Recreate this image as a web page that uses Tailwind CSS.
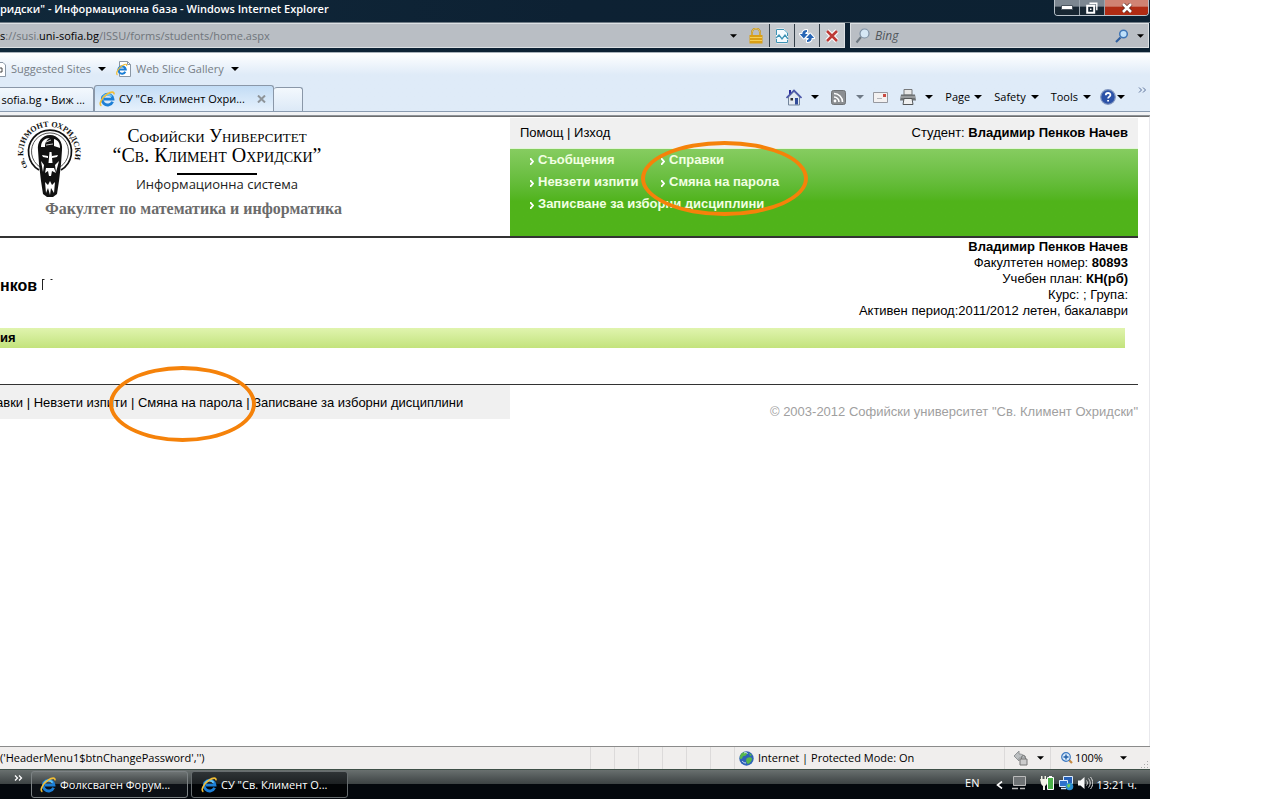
<!DOCTYPE html>
<html lang="bg">
<head>
<meta charset="utf-8">
<title>СУ "Св. Климент Охридски" - Информационна база</title>
<script src="https://cdn.jsdelivr.net/npm/@tailwindcss/browser@4"></script>
</head>
<body class="bg-white">
<svg class="hidden" aria-hidden="true">
  <symbol id="caret" viewBox="0 0 8 4"><path d="M0 0h8L4 4z" fill="currentColor"/></symbol>
  <symbol id="ie" viewBox="0 0 16 16">
    <path d="M13.6 10.7a5.4 5.4 0 1 1 .4-2.6H5" fill="none" stroke="#1c7fd6" stroke-width="2.8"/>
    <path d="M4 6.600a5 5 0 0 1 8.600-1" fill="none" stroke="#6cc8f5" stroke-width="1.800"/>
    <path d="M2.4 14.8C-.6 13.200 2.600 7 8 3.200 12 .5 15.600.200 14.900 3.400" fill="none" stroke="#f2be35" stroke-width="1.600"/>
  </symbol>
  <symbol id="page-ie" viewBox="0 0 15 16">
    <path d="M3.500.5h8l3 3v12h-11z" fill="#fff" stroke="#8a97a5"/><path d="M11.500.5v3h3" fill="none" stroke="#8a97a5"/>
    <path d="M9.300 10.800a3.700 3.700 0 1 1 .4-2.300H3.500" fill="none" stroke="#1c7fd6" stroke-width="2.100"/>
    <path d="M1.500 14C-1 12 3 6.500 6.500 4.500s4.500-1.500 4 .5" fill="none" stroke="#f2be35" stroke-width="1.200"/>
  </symbol>
</svg>

<div class="mr-[130px] flex min-h-[799px] flex-col overflow-hidden font-['Open_Sans','Noto_Sans',sans-serif] text-[12px] leading-4 text-black">

  <!-- Window frame: title and address row -->
  <header class="border-b border-[#a9b2ba] bg-linear-to-r from-[#10283a] via-[#0d2133] to-[#0c2132]">
    <div class="flex h-[22px] items-start justify-between">
      <h1 class="pt-px text-[11px] font-semibold whitespace-nowrap text-white">ридски" - Информационна база - Windows Internet Explorer</h1>
      <div class="mr-px flex h-4 overflow-hidden rounded-b-[4px] border border-t-0 border-[#b9c2ca]">
        <button aria-label="Minimize" class="flex w-[25px] items-center justify-center border-r border-[#9aa5ae] bg-linear-to-b from-[#7c8791] from-40% to-[#182733] to-50%"><svg class="h-[5px] w-3" viewBox="0 0 12 5"><path d="M.5.5h11v4H.5z" fill="#fff" stroke="#4b5660"/></svg></button>
        <button aria-label="Restore" class="flex w-[25px] items-center justify-center border-r border-[#9aa5ae] bg-linear-to-b from-[#7c8791] from-40% to-[#182733] to-50%"><svg class="h-3 w-3" viewBox="0 0 12 12"><path d="M3.500 1.200h7.300v7" fill="none" stroke="#fff" stroke-width="1.400"/><path d="M1.200 3.700h7v7h-7z" fill="none" stroke="#fff" stroke-width="2"/><path d="M4 6.500h1.500V8H4z" fill="#fff"/></svg></button>
        <button aria-label="Close" class="flex w-[43px] items-center justify-center bg-linear-to-b from-[#d08373] from-40% to-[#b02c14] to-50%"><svg class="h-[10px] w-3" viewBox="0 0 12 10"><path d="M2 1l8 8M10 1L2 9" stroke="#5a2820" stroke-width="4"/><path d="M2 1l8 8M10 1L2 9" stroke="#fff" stroke-width="2.600"/></svg></button>
      </div>
    </div>
    <div class="flex gap-[5px] border-t border-[#707c86] pb-1">
      <div class="flex h-[25px] min-w-0 flex-1 border border-l-0 border-[#dde1e4] bg-[#b9bec4]">
        <div role="textbox" contenteditable="true" aria-label="Address" class="flex flex-1 items-center text-[11px] whitespace-nowrap text-[#6f757b]"><span><span class="text-black">s</span>://susi.<span class="text-black">uni-sofia.bg</span>/ISSU/forms/students/home.aspx</span></div>
        <button aria-label="Show addresses" class="flex w-5 items-center justify-center"><svg class="h-1 w-[7px]"><use href="#caret"/></svg></button>
        <button aria-label="Security report" class="flex w-[26px] items-center justify-center"><svg class="h-4 w-4" viewBox="0 0 16 16"><path d="M4 8V4.500a4 4 0 0 1 8 0V8" fill="none" stroke="#b98b22" stroke-width="2"/><path d="M4 8V4.500a4 4 0 0 1 8 0V8" fill="none" stroke="#f3d26a" stroke-width=".8"/><path d="M1.500 7h13v8.500h-13z" fill="#d99f16"/><path d="M2 9.500h12M2 12.500h12" stroke="#f5cf55"/></svg></button>
        <button aria-label="Compatibility view" class="flex w-[25px] items-center justify-center border-l border-[#333f49] bg-[#c5cacf]"><svg class="h-4 w-4" viewBox="0 0 16 16"><path d="M2.500 1h7.500l3.500 3.500V15h-11z" fill="#f4fbff" stroke="#fff"/><path d="M2.500 7V1.500H10L13.500 5v3M2.500 11v3.500h11V12" fill="none" stroke="#3d93b5"/><path d="M2 10l3-3 3 4 3-4 3 4" fill="none" stroke="#3d93b5" stroke-width="1.300"/></svg></button>
        <button aria-label="Refresh" class="flex w-[25px] items-center justify-center border-l border-[#333f49] bg-[#c5cacf]"><svg class="h-4 w-4" viewBox="0 0 16 16"><g stroke="#fff" stroke-width="2" stroke-linejoin="round"><path d="M8 2C5 2 3.300 3.300 3.300 6H.8l4 4.500 4-4.500H6.300C6.300 4.500 7 4 8 4z"/><path d="M8 14c3 0 4.700-1.300 4.700-4h2.500l-4-4.500-4 4.500h2.500c0 1.500-.7 2-1.700 2z"/></g><g fill="#2866b4"><path d="M8 2C5 2 3.300 3.300 3.300 6H.8l4 4.500 4-4.500H6.300C6.300 4.500 7 4 8 4z"/><path d="M8 14c3 0 4.700-1.300 4.700-4h2.500l-4-4.500-4 4.500h2.500c0 1.500-.7 2-1.700 2z"/></g></svg></button>
        <button aria-label="Stop" class="flex w-[25px] items-center justify-center border-l border-[#333f49] bg-[#c5cacf]"><svg class="h-[14px] w-[14px]" viewBox="0 0 14 14"><path d="M2 2l10 10M12 2L2 12" stroke="#fff" stroke-width="4.600"/><path d="M2 2l10 10M12 2L2 12" stroke="#bd3a36" stroke-width="2.600"/></svg></button>
      </div>
      <div class="mr-px flex h-[25px] w-[299px] items-center border border-[#dde1e4] bg-[#b9bec4] pr-1 pl-1">
        <svg class="h-4 w-4" viewBox="0 0 16 16"><path d="M6 9L1.500 14.500" stroke="#6c7780" stroke-width="2"/><circle cx="9.500" cy="5.500" r="4.500" fill="#d6e7f5" stroke="#7e90a4" stroke-width="1.200"/></svg>
        <input type="text" aria-label="Search" placeholder="Bing" class="ml-1 min-w-0 flex-1 bg-transparent italic outline-none placeholder:text-[#51575c]">
        <button aria-label="Search Bing" class="mr-2"><svg class="block h-[14px] w-[14px]" viewBox="0 0 14 14"><path d="M5.500 8.500L1 13" stroke="#2f5f9f" stroke-width="2.200"/><circle cx="8.500" cy="5" r="3.800" fill="#bfe0fa" stroke="#3f75b5" stroke-width="1.500"/></svg></button>
        <button aria-label="Search options"><svg class="block h-1 w-[7px]"><use href="#caret"/></svg></button>
      </div>
    </div>
  </header>

  <!-- Favorites and tabs -->
  <div class="border-b border-[#8d9297] bg-linear-to-b from-white to-[#dfebf8] to-35%">
    <div class="mb-px flex h-8 items-center text-[#777e86]">
      <svg class="h-[15px] w-[6px]" viewBox="0 0 6 15"><path d="M0 .5h3L5.500 3v11.500H0" fill="#fff" stroke="#8a97a5"/><path d="M0 6h2v4H0" fill="none" stroke="#444"/></svg>
      <a href="#" class="ml-[5px] flex w-[105px] items-center justify-between text-[11px] whitespace-nowrap">Suggested Sites<svg class="mr-[10px] h-1 w-2 text-black"><use href="#caret"/></svg></a>
      <svg class="h-4 w-[15px]"><use href="#page-ie"/></svg>
      <a href="#" class="ml-[5px] flex w-[103px] items-center justify-between text-[11px] whitespace-nowrap">Web Slice Gallery<svg class="h-1 w-2 text-black"><use href="#caret"/></svg></a>
    </div>
    <div class="flex h-[26px] items-end justify-between border-b border-[#8a9bb0]">
      <div class="flex items-end">
        <button class="flex h-6 w-[94px] items-center justify-end rounded-tr-[3px] border-t border-r border-[#8a97a8] bg-linear-to-b from-[#f3f8fd] to-[#dce9f7] pt-px pr-2 text-[11px] whitespace-nowrap">sofia.bg • Виж ...</button>
        <div class="flex h-[26px] w-[180px] items-center rounded-t-[3px] border border-b-0 border-[#8a97a8] bg-linear-to-b from-[#c2dcf5] to-[#e6f1fc] px-1 text-[11px] whitespace-nowrap">
          <svg class="mr-1 h-4 w-4"><use href="#ie"/></svg>
          <button class="flex-1 text-left">СУ "Св. Климент Охри...</button>
          <button aria-label="Close tab" class="mr-[3px]"><svg class="block h-2 w-[9px]" viewBox="0 0 9 8"><path d="M1 .5l7 7M8 .5l-7 7" stroke="#8e9499" stroke-width="2"/></svg></button>
        </div>
        <button aria-label="New tab" class="h-6 w-[29px] rounded-t-[3px] border border-b-0 border-l-0 border-[#8a97a8] bg-linear-to-b from-[#f3f8fd] to-[#dce9f7]"></button>
      </div>
      <div class="flex h-[26px] items-center pr-[3px] pb-[2px] text-[11px]">
        <button aria-label="Home" class="mr-3 flex items-center gap-[9px]"><svg class="h-[17px] w-4" viewBox="0 0 16 17"><path d="M3 1h2v5H3z" fill="#2b2b9c"/><path d="M2.500 8L8 2.500 13.500 8v8h-11z" fill="#e3e9f1" stroke="#73859b"/><path d="M.5 9L8 1.500 15.500 9" fill="none" stroke="#4a55a8" stroke-width="1.600"/><path d="M9 9h3v6.500H9z" fill="#314c9a"/><path d="M4.500 9h2.500v2.500H4.500z" fill="#333"/></svg><svg class="h-1 w-2"><use href="#caret"/></svg></button>
        <button aria-label="Feeds" class="mr-[9px] flex items-center gap-[10px]"><svg class="h-[15px] w-[15px]" viewBox="0 0 15 15"><rect x=".5" y=".5" width="14" height="14" rx="2" fill="#8b8e91" stroke="#6f7275"/><circle cx="4" cy="11" r="1.400" fill="#fff"/><path d="M3 7a5 5 0 0 1 5 5M3 3.500a8.500 8.500 0 0 1 8.500 8.500" fill="none" stroke="#fff" stroke-width="1.600"/></svg><svg class="h-1 w-2 text-[#6f7a86]"><use href="#caret"/></svg></button>
        <button aria-label="Read mail" class="mr-3"><svg class="block h-[11px] w-[15px]" viewBox="0 0 15 11"><path d="M.5.5h14v10H.5z" fill="#f3f1f1" stroke="#96989f"/><path d="M10 2h3v3h-3z" fill="#c94a42"/><path d="M4 6.500h5" stroke="#b5b5ba"/></svg></button>
        <button aria-label="Print" class="mr-3 flex items-center gap-[9px]"><svg class="h-4 w-4" viewBox="0 0 16 16"><path d="M4 .5h8V6H4z" fill="#e8e8e8" stroke="#77797b"/><path d="M1 5.500h14l1 6H0z" fill="#6e7275"/><path d="M1 8h14" stroke="#c3c5c7"/><path d="M4 9.500h8l1 6H3z" fill="#f0f0f0" stroke="#55585a"/></svg><svg class="h-1 w-2"><use href="#caret"/></svg></button>
        <button class="mr-3 flex items-center gap-1">Page<svg class="h-1 w-2"><use href="#caret"/></svg></button>
        <button class="mr-3 flex items-center gap-[5px]">Safety<svg class="h-1 w-2"><use href="#caret"/></svg></button>
        <button class="mr-[9px] flex items-center gap-[5px]">Tools<svg class="h-1 w-2"><use href="#caret"/></svg></button>
        <button aria-label="Help" class="mr-[13px] flex items-center gap-px"><svg class="h-4 w-4" viewBox="0 0 16 16"><circle cx="8" cy="8" r="7.300" fill="#2c52a8" stroke="#8296bf" stroke-width="1.200"/><path d="M5.800 6.300c0-3 4.600-3 4.600-.3 0 1.700-2.300 1.600-2.300 3.600M8.100 11v1.600" fill="none" stroke="#fff" stroke-width="1.800"/></svg><svg class="h-1 w-2"><use href="#caret"/></svg></button>
        <button aria-label="More" class="self-start"><svg class="mt-[2px] block h-[6px] w-[9px]" viewBox="0 0 9 6"><path d="M1 .5L3.500 3 1 5.500M5 .5L7.500 3 5 5.500" fill="none" stroke="#5b7199"/></svg></button>
      </div>
    </div>
    <div class="h-[3px] bg-[#f1f2f4]"></div>
  </div>

  <!-- Web page -->
  <main class="flex-1 border-t border-r border-t-[#6d6d6d] border-r-[#e8e8ec] bg-white font-['Liberation_Sans',Arial,sans-serif] text-[13px]">
    <div class="mr-[11px] flex h-[121px] border-b-2 border-[#333]">
      <div class="w-[510px]">
        <div class="flex pl-4">
          <svg class="mt-1 h-[76px] w-[68px]" viewBox="0 0 68 76" role="img" aria-label="Св. Климент Охридски">
            <path id="ring" d="M11.500 46A26 26 0 1 1 55 46L53 49" fill="none"/>
            <text font-family="Liberation Serif" font-weight="700" font-size="8" fill="#111"><textPath href="#ring">св. КЛИМОНТ ОХРИДСКИ</textPath></text>
            <path d="M23 49a21.500 21.500 0 1 1 22 0" fill="none" stroke="#111" stroke-width="1.700"/>
            <path d="M24 46a18.500 18.500 0 1 1 20 0" fill="none" stroke="#555" stroke-width="1"/>
            <path d="M34 14c-8 0-13 7-12 15l1 14 2 17 2 13 4 3h6l4-3 2-13 2-17 1-14c1-8-4-15-12-15z" fill="#111"/>
            <path d="M25 26c0-6 4-9 9-9-4 2-5 5-5 9zM38 18c4 1 6 4 6 9l-6-2zM26 34l6 1v2l-5-1zM36 35l6-1-1 2-5 1zM33.500 31h2l1 11h-4zM25 40l3 4-1 7zM43 40l-4 4 1 7zM30 47h8l2 5-4-2-1 5h-2l-1-5-3 2zM29 61l3 3 2-4 2 4 3-3-1 11-3-5-1 7-2-7-2 5z" fill="#fff"/>
            <path d="M30 21l5-2M30 24l7-1" stroke="#fff" stroke-width=".8"/>
          </svg>
          <div class="ml-6 mt-[10px] flex w-[218px] flex-col items-center whitespace-nowrap">
            <div class="font-['Liberation_Serif',serif] text-[18px] leading-[19px] [font-variant:small-caps]">Софийски Университет</div>
            <div class="font-['Liberation_Serif',serif] text-[20px] leading-[19px] [font-variant:small-caps]">“Св. Климент Охридски”</div>
            <div class="mt-2 h-[2px] w-20 bg-black"></div>
            <div class="mt-px font-['Open_Sans',sans-serif] text-[13px] leading-4 text-[#222]">Информационна система</div>
          </div>
        </div>
        <div class="ml-[45px] font-['Liberation_Serif',serif] text-[16px] leading-6 font-bold whitespace-nowrap text-[#6b6b6b]">Факултет по математика и информатика</div>
      </div>
      <div class="flex flex-1 flex-col pt-px">
        <div class="flex h-[30px] items-center justify-between bg-[#f0f0f0] px-[10px]">
          <div><a href="#">Помощ</a> | <a href="#">Изход</a></div>
          <div>Студент: <b>Владимир Пенков Начев</b></div>
        </div>
        <nav class="relative flex-1 border-t border-[#e2f6d8] bg-linear-to-b from-[#86cc60] via-[#50b31a] via-60% to-[#50b31a] pl-5 font-bold text-[#f2ffe2]">
          <ul class="grid grid-cols-[131px_max-content] leading-[22px] whitespace-nowrap">
            <li class="flex items-center gap-1"><svg class="mt-[2px] h-[7px] w-1" viewBox="0 0 4 7"><path d="M0 0l3 3.500L0 7" fill="none" stroke="#fff" stroke-width="1.800"/></svg><a href="#">Съобщения</a></li>
            <li class="flex items-center gap-1"><svg class="mt-[2px] h-[7px] w-1" viewBox="0 0 4 7"><path d="M0 0l3 3.500L0 7" fill="none" stroke="#fff" stroke-width="1.800"/></svg><a href="#">Справки</a></li>
            <li class="flex items-center gap-1"><svg class="mt-[2px] h-[7px] w-1" viewBox="0 0 4 7"><path d="M0 0l3 3.500L0 7" fill="none" stroke="#fff" stroke-width="1.800"/></svg><a href="#">Невзети изпити</a></li>
            <li class="flex items-center gap-1"><svg class="mt-[2px] h-[7px] w-1" viewBox="0 0 4 7"><path d="M0 0l3 3.500L0 7" fill="none" stroke="#fff" stroke-width="1.800"/></svg><a href="#">Смяна на парола</a></li>
            <li class="col-span-2 flex items-center gap-1"><svg class="mt-[2px] h-[7px] w-1" viewBox="0 0 4 7"><path d="M0 0l3 3.500L0 7" fill="none" stroke="#fff" stroke-width="1.800"/></svg><a href="#">Записване за изборни дисциплини</a></li>
          </ul>
          <div class="absolute -top-2 left-[131px] h-[75px] w-[167px] rounded-[50%] border-4 border-[#f5820a]"></div>
        </nav>
      </div>
    </div>

    <div class="mr-[21px] flex items-start justify-between">
      <h2 class="flex pt-[38px] text-[16px] leading-5 font-bold whitespace-nowrap">нков<svg class="ml-1 h-[14px] w-[14px]" viewBox="0 0 14 14"><path d="M1.500 14V3M1.500 3.500h2M9.500 3.500h2" stroke="#222"/></svg></h2>
      <div class="pt-px text-right leading-4">
        <p class="font-bold">Владимир Пенков Начев</p>
        <p>Факултетен номер: <b>80893</b></p>
        <p>Учебен план: <b>КН(рб)</b></p>
        <p>Курс: ; Група:</p>
        <p>Активен период:2011/2012 летен, бакалаври</p>
      </div>
    </div>

    <div class="mt-[9px] mr-6 flex h-5 items-center bg-linear-to-b from-[#e0f4ae] to-[#c3e37c]"><h3 class="font-bold">ия</h3></div>

    <footer class="relative mt-9 mr-[11px] flex items-start justify-between border-t border-[#333]">
      <div class="flex h-[34px] w-[510px] items-center bg-[#f0f0f0] pt-px">
        <div class="-ml-1 flex whitespace-pre"><a href="#">авки</a> | <a href="#">Невзети изпити</a> | <a href="#">Смяна на парола</a> | <a href="#">Записване за изборни дисциплини</a></div>
      </div>
      <p class="pt-[19px] text-[#a0a0a0]">© 2003-2012 Софийски университет "Св. Климент Охридски"</p>
      <div class="absolute -top-[19px] left-[109px] h-[76px] w-[147px] rounded-[50%] border-4 border-[#f5820a]"></div>
    </footer>
  </main>

  <!-- Status bar -->
  <div class="flex h-[23px] items-stretch justify-between border-t border-[#8b8b8b] bg-[#f0eeed] text-[11px]">
    <div class="flex items-center whitespace-nowrap">('HeaderMenu1$btnChangePassword','')</div>
    <div class="flex items-stretch">
      <div class="w-6 border-l border-[#dcdada]"></div><div class="w-6 border-l border-[#dcdada]"></div><div class="w-6 border-l border-[#dcdada]"></div><div class="w-6 border-l border-[#dcdada]"></div><div class="w-6 border-l border-[#dcdada]"></div><div class="w-6 border-l border-[#dcdada]"></div>
      <div class="flex w-[270px] items-center gap-1 border-l border-[#dcdada] pl-1"><svg class="h-[15px] w-[15px]" viewBox="0 0 15 15"><circle cx="7.500" cy="7.500" r="7.200" fill="#2e62b8"/><path d="M2 3c3-3 6-2 6-1s-1 3-3 3-1 3-3 3S1 5 2 3zM8 7c2-1 5-1 5 1s-3 5-4 5-3-4-1-6zM10 2l3 2-2 1z" fill="#58b94a"/><path d="M5 2c2-1 4 0 3 1M3 10c1 1 2 2 4 2" stroke="#cfe6f8" fill="none"/></svg>Internet | Protected Mode: On</div>
      <button aria-label="Page security" class="flex w-[46px] items-center gap-2 border-l border-[#dcdada] pl-2"><svg class="h-4 w-4" viewBox="0 0 16 16"><path d="M1 6l5-5v3c4 0 6 2 6 4H6v3z" fill="#bcbfc1" stroke="#919496"/><path d="M7 9h7v6H7z" fill="#ccc" stroke="#777"/><path d="M8.500 9V7.500a2 2 0 0 1 4 0V9" fill="none" stroke="#777"/></svg><svg class="h-1 w-[7px]"><use href="#caret"/></svg></button>
      <button aria-label="Zoom" class="mr-[3px] flex w-[88px] items-center border-l border-[#dcdada] pl-[10px]"><svg class="mr-[2px] h-3 w-3" viewBox="0 0 12 12"><path d="M7.500 7.500L11 11" stroke="#c58a42" stroke-width="2.200"/><circle cx="5" cy="5" r="4.300" fill="#d8eafb" stroke="#3b78c0" stroke-width="1.200"/><path d="M5 2.500v5M2.500 5h5" stroke="#225fa8" stroke-width="1.400"/></svg>100%<svg class="ml-[17px] h-1 w-[7px]"><use href="#caret"/></svg></button>
      <svg class="mr-px h-2 w-2 self-end" viewBox="0 0 8 8"><path d="M6 0h1v1H6zM3 3h1v1H3zM6 3h1v1H6zM0 6h1v1H0zM3 6h1v1H3zM6 6h1v1H6z" fill="#aaa"/></svg>
    </div>
  </div>

  <!-- Taskbar -->
  <div class="flex h-[30px] items-center justify-between border-t border-[#3e4f47] bg-linear-to-b from-[#69706f] from-0% via-[#3d4344] via-48% to-[#04080d] to-50% text-[11px] text-white">
    <div class="flex items-center gap-[2px] whitespace-nowrap">
      <button aria-label="More toolbar items" class="mr-[6px] ml-[14px] self-start pt-1"><svg class="block h-[6px] w-[9px]" viewBox="0 0 9 6"><path d="M1 .5L3.500 3 1 5.500M5 .5L7.500 3 5 5.500" fill="none" stroke="#fff" stroke-width="1.300"/></svg></button>
      <button class="flex h-[27px] w-[157px] items-center gap-1 rounded-[3px] border border-[#7c8284] bg-linear-to-b from-[#6e7474] via-[#3c4142] via-48% to-[#0c1015] to-50% pl-2"><svg class="h-4 w-4"><use href="#ie"/></svg>Фолксваген Форум...</button>
      <button class="ml-px flex h-[27px] w-[157px] items-center gap-1 rounded-[3px] border border-[#666c6e] bg-linear-to-b from-[#2f3436] via-[#1c2022] via-48% to-[#020406] to-50% pt-px pl-[9px]"><svg class="h-4 w-4"><use href="#ie"/></svg>СУ "Св. Климент О...</button>
    </div>
    <div class="flex items-center pr-[13px]">
      <button class="mr-4 pb-1">EN</button>
      <button aria-label="Show hidden icons" class="mr-2"><svg class="block h-2 w-[7px]" viewBox="0 0 7 8"><path d="M6 .5L1.500 4 6 7.500" fill="none" stroke="#fff" stroke-width="1.600"/></svg></button>
      <svg class="mr-3 mb-1 h-4 w-[17px]" viewBox="0 0 17 16"><path d="M2.500 1.500h12v9h-12z" fill="#6f7375" stroke="#bbb"/><path d="M1 13.500h6M9 13.500h5" stroke="#bbb" stroke-width="1.500"/></svg>
      <svg class="mr-1 mb-1 h-4 w-[15px]" viewBox="0 0 15 16"><path d="M7.500 2.500h6v12h-6z" fill="#4bb04a" stroke="#fff"/><path d="M9 1h3v1.500H9z" fill="#fff"/><path d="M0 4h7v4c0 2-2 3-2 3v4H3v-4S1 10 1 8zM1 1h1.500v3H1zM4.500 1H6v3H4.500z" fill="#f2f2e6"/></svg>
      <svg class="mr-1 mb-1 h-4 w-[15px]" viewBox="0 0 15 16"><path d="M4.500 1.500h9v7h-9z" fill="#2661b8" stroke="#dcecff"/><path d="M.5 5.500h8v6h-8z" fill="#2f72cb" stroke="#dcecff"/><path d="M2 13.500h5" stroke="#dcecff" stroke-width="1.500"/><circle cx="10.500" cy="11.500" r="3.800" fill="#2e8fd0"/><path d="M8 10c2-2 4-1 3 1s-2 3-3-1z" fill="#6ed05b"/></svg>
      <svg class="mr-1 mb-1 h-[14px] w-[15px]" viewBox="0 0 15 14"><path d="M0 4.500h2.500L6.500 1v12l-4-3.500H0z" fill="#f5f5f5"/><path d="M8.500 4.500c1.200 1.500 1.200 3.500 0 5M10.500 2.500c2.300 3 2.300 6 0 9M12.500 1c3 4 3 8 0 12" fill="none" stroke="#dcdcdc"/></svg>
      <time>13:21 ч.</time>
    </div>
  </div>
</div>
</body>
</html>
